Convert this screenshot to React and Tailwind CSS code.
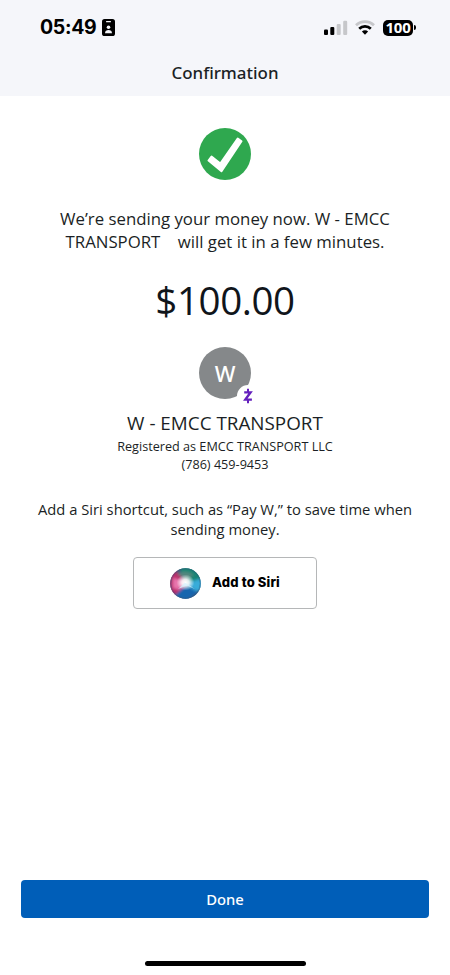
function IdCardIcon() {
  return (
    <svg width="13" height="17" viewBox="0 0 13 17">
      <rect width="13" height="17" rx="2.6" fill="#000" />
      <rect x="4" y="2" width="5" height="1.3" rx="0.6" fill="#f5f6fa" />
      <circle cx="6.5" cy="8.2" r="1.8" fill="#f5f6fa" />
      <path d="M3 14.200c0-2.200 1.500-3.300 3.500-3.300s3.500 1.100 3.500 3.300z" fill="#f5f6fa" />
    </svg>
  );
}

function SignalIcon() {
  return (
    <svg width="24" height="16" viewBox="0 0 24 16">
      <rect x="0" y="9.500" width="4" height="5.500" rx="1.1" fill="#000" />
      <rect x="6.300" y="7" width="4" height="8" rx="1.1" fill="#000" />
      <rect x="12.700" y="4" width="4" height="11" rx="1.1" fill="#c6c7ca" />
      <rect x="19.200" y="0.800" width="4" height="14.200" rx="1.1" fill="#c6c7ca" />
    </svg>
  );
}

function WifiIcon() {
  return (
    <svg width="20" height="15" viewBox="0 0 20 15" fill="none" strokeWidth="2.7">
      <path d="M1 5.300A12.700 12.700 0 0 1 19 5.300" stroke="#c6c7ca" />
      <path d="M4.200 8.700A8.200 8.200 0 0 1 15.800 8.700" stroke="#000" />
      <path d="M10 14.700 6.900 11.500a4.400 4.400 0 0 1 6.200 0z" fill="#000" />
    </svg>
  );
}

function ZelleIcon() {
  return (
    <svg width="10" height="16" viewBox="0 0 10 16" fill="none" stroke="#6420bd" strokeWidth="2.300">
      <path d="M1.200 4.300H7.600L2.200 11.700H8.900" />
      <path d="M5 0.800V4.300M5 11.700V15.200" strokeWidth="2" />
    </svg>
  );
}

function SiriIcon() {
  return (
    <svg width="31" height="31" viewBox="0 0 31 31">
      <defs>
        <radialGradient id="glow">
          <stop offset="0" stopColor="#fff" />
          <stop offset="0.4" stopColor="#fff" stopOpacity="0.85" />
          <stop offset="1" stopColor="#fff" stopOpacity="0" />
        </radialGradient>
        <filter id="soft" x="-20%" y="-20%" width="140%" height="140%">
          <feGaussianBlur stdDeviation="1.5" />
        </filter>
        <clipPath id="orb">
          <circle cx="15.500" cy="15.500" r="15.300" />
        </clipPath>
      </defs>
      <g clipPath="url(#orb)">
        <rect width="31" height="31" fill="#37567f" />
        <g filter="url(#soft)">
          <path d="M8 -3H34V13L16 15Z" fill="#168573" />
          <path d="M-2 6 6 2 16 15 7 28 -2 27Z" fill="#b92a6a" />
          <path d="M3 10 16 13 10 22 3 20Z" fill="#e874ad" />
          <path d="M16 15 33 10V22L24 24Z" fill="#38acd9" />
          <path d="M16 17 28 24 16 34 4 28Z" fill="#1865ae" />
          <path d="M7 6Q15 1 24 7L17 11Z" fill="#54877f" />
        </g>
        <ellipse cx="15.500" cy="14.500" rx="9" ry="8" fill="url(#glow)" />
        <path d="M8 21 15 14.500 25 21 17 17.500Z" fill="#d5f3ff" opacity="0.7" />
        <circle cx="15.500" cy="15.500" r="14.700" fill="none" stroke="#32597c" strokeOpacity="0.45" />
      </g>
    </svg>
  );
}

export default function App() {
  return (
    <div className="flex h-[975px] w-[450px] flex-col bg-white font-['Open_Sans',sans-serif] text-[#1b1f25]">
      <header className="h-24 bg-[#f5f6fa]">
        <div className="flex h-[55px] items-center pl-[39px] pr-[34px]">
          <span className="w-[63px] whitespace-nowrap pl-px pt-px font-['Inter',sans-serif] text-[19.500px] font-bold tracking-[-0.3px] text-black">
            05:49
          </span>
          <IdCardIcon />
          <div className="ml-auto flex items-center">
            <SignalIcon />
            <div className="ml-[7px]">
              <WifiIcon />
            </div>
            <div className="ml-2 flex h-4 w-[30px] items-center justify-center rounded-[5px] bg-black font-['Open_Sans',sans-serif] text-[15px] font-bold tracking-[-0.3px] text-white">
              100
            </div>
            <div className="ml-px h-[5px] w-[2px] rounded-r-full bg-black" />
          </div>
        </div>
        <h1 className="text-center font-['Noto_Sans',sans-serif] text-[16.900px] font-medium leading-[36px]">
          Confirmation
        </h1>
      </header>

      <main className="flex flex-1 flex-col items-center text-center">
        <svg className="mt-8" width="52" height="52" viewBox="0 0 52 52">
          <circle cx="26" cy="26" r="26" fill="#2fa84f" />
          <path
            d="M9.500 32.500 12.500 28.500 21.300 35.500 38.700 10.500 42.500 13.200 22.500 43.200Z"
            fill="#fff"
            stroke="#fff"
            strokeWidth="2"
            strokeLinejoin="round"
          />
        </svg>

        <p className="mt-[27px] whitespace-pre text-[16.800px] leading-[23px]">
          We’re sending your money now. W - EMCC{"\n"}
          TRANSPORT{"\u00a0\u00a0\u00a0\u00a0"}will get it in a few minutes.
        </p>

        <p className="mt-[22px] text-[38.500px] leading-[50px] tracking-[-0.4px] text-[#10151b]">
          $100.00
        </p>

        <div className="relative mt-[22px] flex size-[52px] items-center justify-center rounded-full bg-[#85888a] font-['Noto_Sans',sans-serif] text-[22px] font-medium text-white">
          W
          <div className="absolute left-[38px] top-[38px] flex size-[22px] items-center justify-center rounded-full bg-white">
            <ZelleIcon />
          </div>
        </div>

        <h2 className="mt-3 text-[18.850px] leading-[25px]">W - EMCC TRANSPORT</h2>
        <p className="mt-px text-[12.650px] leading-[18px]">Registered as EMCC TRANSPORT LLC</p>
        <p className="text-[12.650px] leading-[18px]">(786) 459-9453</p>

        <p className="mt-[26px] whitespace-pre text-[14.750px] leading-[20px]">
          Add a Siri shortcut, such as “Pay W,” to save time when{"\n"}
          sending money.
        </p>

        <button className="mt-[18px] flex h-[52px] w-[184px] items-center justify-center gap-[11px] rounded-[4px] border border-[#b5b7b8] font-['Inter',sans-serif] text-[13px] font-extrabold tracking-[0.15px] text-black">
          <SiriIcon />
          Add to Siri
        </button>
      </main>

      <footer className="flex flex-col items-center px-[21px] pb-[9px]">
        <button className="h-[38px] w-full rounded-[4px] bg-[#005eb8] font-['Noto_Sans',sans-serif] text-[14.800px] font-medium text-white">
          Done
        </button>
        <div className="mt-[43px] h-[5px] w-[161px] rounded-full bg-black" />
      </footer>
    </div>
  );
}
